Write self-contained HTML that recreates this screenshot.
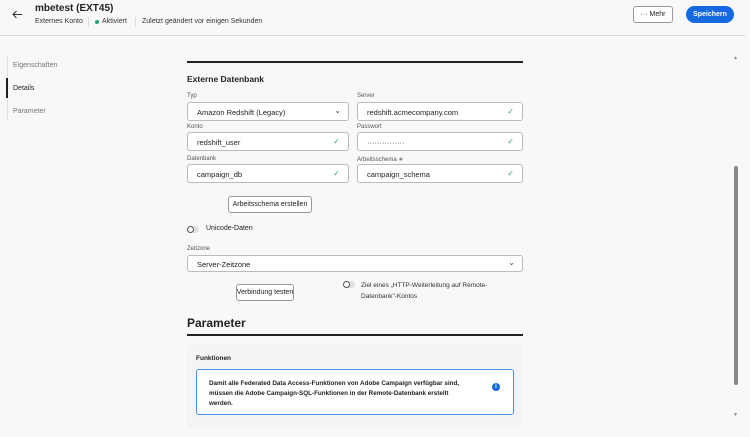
<!DOCTYPE html>
<html><head><meta charset="utf-8"><style>
*{margin:0;padding:0;box-sizing:border-box}
body{width:750px;height:437px;background:#f8f8f8;font-family:"Liberation Sans",sans-serif;color:#222;position:relative;overflow:hidden}
.a{position:absolute;white-space:nowrap}
.lbl{font-size:6px;color:#555}
.inp{position:absolute;background:#fff;border:1px solid #bbb;border-radius:3px;height:19px;font-size:7.5px;padding:5px 9px 0;color:#222;white-space:nowrap}
.chk{position:absolute;right:8px;top:4px;color:#2d9d78;font-size:8px}
.chev{position:absolute;right:7px;top:3px;font-size:8px;color:#444}
.btn{position:absolute;background:#fff;border:1px solid #999;border-radius:3px;font-size:7px;color:#222;white-space:nowrap;display:flex;align-items:center;justify-content:center}
.tog{position:absolute;width:12px;height:7px;border-radius:4px;background:#e2e2e2}
.tog::after{content:"";position:absolute;left:0;top:0;width:7px;height:7px;border-radius:50%;border:1.2px solid #555;background:#fff;box-sizing:border-box}
</style></head><body>
<svg class="a" style="left:12px;top:10px" width="11" height="9" viewBox="0 0 11 9"><path d="M10 4.5H1.5M4.5 1L1 4.5 4.5 8" stroke="#333" stroke-width="1" fill="none"/></svg>
<div class="a" style="left:35px;top:3px;font-size:10px;font-weight:bold">mbetest (EXT45)</div>
<div class="a" style="left:35px;top:18px;font-size:7px;color:#333">Externes Konto</div>
<div class="a" style="left:88px;top:17px;width:1px;height:10px;background:#ddd"></div>
<div class="a" style="left:95px;top:20px;width:4px;height:4px;border-radius:50%;background:#2d9d78"></div>
<div class="a" style="left:102px;top:18px;font-size:7px;color:#333">Aktiviert</div>
<div class="a" style="left:135px;top:17px;width:1px;height:10px;background:#ddd"></div>
<div class="a" style="left:142px;top:18px;font-size:7px;color:#333">Zuletzt geändert vor einigen Sekunden</div>
<div class="btn" style="left:633px;top:6px;width:40px;height:17px">··· Mehr</div>
<div class="a" style="left:686px;top:6px;width:48px;height:17px;border-radius:9px;background:#1468e0;color:#fff;font-size:7px;font-weight:bold;display:flex;align-items:center;justify-content:center">Speichern</div>
<div class="a" style="left:0;top:35px;width:745px;height:1px;background:#d8d8d8"></div>

<div class="a" style="left:7px;top:55px;width:1px;height:66px;background:#e0e0e0"></div>
<div class="a" style="left:6px;top:78px;width:2px;height:20px;background:#222"></div>
<div class="a" style="left:13px;top:62px;font-size:7px;color:#777">Eigenschaften</div>
<div class="a" style="left:13px;top:85px;font-size:7px;color:#222">Details</div>
<div class="a" style="left:13px;top:108px;font-size:7px;color:#777">Parameter</div>

<div class="a" style="left:187px;top:61px;width:336px;height:2px;background:#222"></div>
<div class="a" style="left:187px;top:74px;font-size:8.5px;font-weight:bold">Externe Datenbank</div>
<div class="a lbl" style="left:187px;top:93px">Typ</div>
<div class="a lbl" style="left:357px;top:93px">Server</div>
<div class="inp" style="left:187px;top:102px;width:162px">Amazon Redshift (Legacy)<span class="chev">⌄</span></div>
<div class="inp" style="left:357px;top:102px;width:166px">redshift.acmecompany.com<span class="chk">✓</span></div>
<div class="a lbl" style="left:187px;top:124px">Konto</div>
<div class="a lbl" style="left:357px;top:124px">Passwort</div>
<div class="inp" style="left:187px;top:132px;width:162px">redshift_user<span class="chk">✓</span></div>
<div class="inp" style="left:357px;top:132px;width:166px">···············<span class="chk">✓</span></div>
<div class="a lbl" style="left:187px;top:156px">Datenbank</div>
<div class="a lbl" style="left:357px;top:156px">Arbeitsschema ∗</div>
<div class="inp" style="left:187px;top:164px;width:162px">campaign_db<span class="chk">✓</span></div>
<div class="inp" style="left:357px;top:164px;width:166px">campaign_schema<span class="chk">✓</span></div>
<div class="btn" style="left:228px;top:196px;width:84px;height:17px">Arbeitsschema erstellen</div>
<div class="tog" style="left:187px;top:226px"></div>
<div class="a" style="left:206px;top:225px;font-size:7px">Unicode-Daten</div>
<div class="a lbl" style="left:187px;top:246px">Zeitzone</div>
<div class="inp" style="left:187px;top:255px;width:336px;height:17px;padding-top:4px">Server-Zeitzone<span class="chev" style="top:2px">⌄</span></div>
<div class="btn" style="left:236px;top:284px;width:58px;height:17px">Verbindung testen</div>
<div class="tog" style="left:343px;top:281px"></div>
<div class="a" style="left:361px;top:280px;font-size:6.5px;color:#333;line-height:11px">Ziel eines „HTTP-Weiterleitung auf Remote-<br>Datenbank"-Kontos</div>
<div class="a" style="left:187px;top:316px;font-size:12px;font-weight:bold">Parameter</div>
<div class="a" style="left:187px;top:334px;width:336px;height:2px;background:#222"></div>
<div class="a" style="left:187px;top:343px;width:336px;height:85px;background:#f4f4f4;border-radius:4px"></div>
<div class="a" style="left:196px;top:355px;font-size:6.5px;font-weight:bold">Funktionen</div>
<div class="a" style="left:196px;top:369px;width:318px;height:46px;background:#fff;border:1.5px solid #4a8ee8;border-radius:3px"></div>
<div class="a" style="left:209px;top:379px;font-size:6.3px;font-weight:bold;line-height:10px">Damit alle Federated Data Access-Funktionen von Adobe Campaign verfügbar sind,<br>müssen die Adobe Campaign-SQL-Funktionen in der Remote-Datenbank erstellt<br>werden.</div>
<div class="a" style="left:492px;top:383px;width:8px;height:8px;border-radius:50%;background:#1468e0;color:#fff;font-size:6px;font-weight:bold;text-align:center;line-height:8px">i</div>

<div class="a" style="left:733px;top:55px;font-size:5px;color:#888">▲</div>
<div class="a" style="left:734px;top:166px;width:4px;height:219px;border-radius:2px;background:#888"></div>
<div class="a" style="left:733px;top:412px;font-size:5px;color:#888">▼</div>
</body></html>
